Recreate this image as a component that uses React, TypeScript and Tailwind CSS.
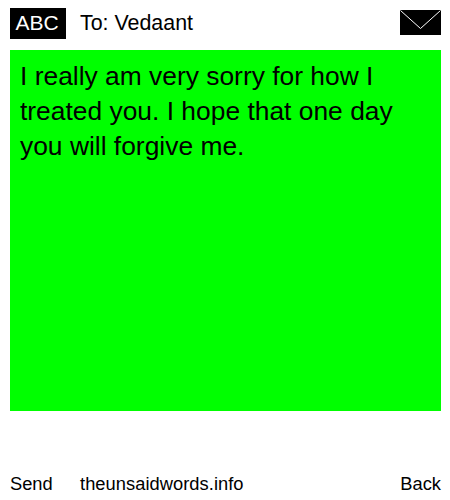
export default function App() {
  return (
    <div className="w-[450px] h-[500px] bg-white text-black flex flex-col pl-[10px] pr-[9px] font-['Liberation_Sans',Arial,sans-serif]">
      {/* header */}
      <div className="flex items-start h-[31px] mt-[8px]">
        <div className="w-[56px] h-[31px] pl-[5.5px] bg-black text-white text-[21px] leading-[29px]">ABC</div>
        <div className="ml-[14px] text-[21.4px] leading-[30px] flex-1">To: Vedaant</div>
        <svg width="41" height="25" viewBox="0 0 41 25" className="mt-[2px]">
          <rect width="41" height="25" fill="#000" />
          <path d="M0.5 0.5 L20.5 18.5 L40.5 0.5" fill="none" stroke="#fff" strokeWidth="1" />
        </svg>
      </div>

      {/* message */}
      <div className="mt-[11px] h-[361px] bg-[#00ff00] px-[10px] pt-[9px] text-[26.4px] leading-[35px]">
        I really am very sorry for how I treated you. I hope that one day you will forgive me.
      </div>

      {/* footer */}
      <div className="mt-auto mb-[4px] flex text-[18.3px] leading-[24px]">
        <span className="w-[70px]">Send</span>
        <span className="flex-1 tracking-[0.05px]">theunsaidwords.info</span>
        <span>Back</span>
      </div>
    </div>
  );
}
